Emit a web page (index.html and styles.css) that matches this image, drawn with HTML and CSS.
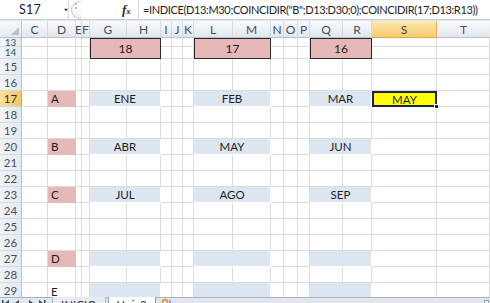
FILE: index.html
```html
<!DOCTYPE html>
<html lang="es">
<head>
<meta charset="utf-8">
<title>Hoja2</title>
<link rel="stylesheet" href="styles.css">
</head>
<body>
<div class="app">
  <div class="formula-bar">
    <div class="namebox"><span class="name">S17</span><svg class="caret" width="6" height="4" viewBox="0 0 6 4"><path d="M0 0H6L3 4Z" fill="#333"/></svg></div>
    <div class="splitter"><span class="arc"></span><span class="dots"></span></div>
    <div class="fx-wrap"><span class="fx">f<small>x</small></span></div>
    <div class="formula">=INDICE(D13:M30;COINCIDIR("B";D13:D30;0);COINCIDIR(17;D13:R13))</div>
  </div>

  <div class="sheet">
    <!-- column headers -->
    <div class="corner"><svg width="8" height="8" viewBox="0 0 8 8"><path d="M8 0V8H0Z" fill="#b7c1cc"/></svg></div>
    <div class="ch">C</div><div class="ch">D</div><div class="ch">E</div><div class="ch">F</div>
    <div class="ch">G</div><div class="ch">H</div><div class="ch">I</div><div class="ch">J</div>
    <div class="ch">K</div><div class="ch">L</div><div class="ch">M</div><div class="ch">N</div>
    <div class="ch">O</div><div class="ch">P</div><div class="ch">Q</div><div class="ch">R</div>
    <div class="ch sel">S</div><div class="ch last">T</div>

    <!-- row 13 -->
    <div class="rh short"><span>13</span></div>
    <div class="c"></div><div class="c"></div><div class="c"></div><div class="c"></div>
    <div class="c head-box">18</div>
    <div class="c"></div><div class="c"></div><div class="c"></div>
    <div class="c head-box">17</div>
    <div class="c"></div><div class="c"></div><div class="c"></div>
    <div class="c head-box">16</div>
    <div class="c"></div><div class="c"></div>

    <!-- row 14 -->
    <div class="rh short clip"><span>14</span></div>
    <div class="c"></div><div class="c"></div><div class="c"></div><div class="c"></div>
    <div class="c"></div><div class="c"></div><div class="c"></div>
    <div class="c"></div><div class="c"></div><div class="c"></div>
    <div class="c"></div><div class="c"></div>

    <!-- row 15 -->
    <div class="rh">15</div>
    <div class="c"></div><div class="c"></div><div class="c"></div><div class="c"></div><div class="c"></div><div class="c"></div>
    <div class="c"></div><div class="c"></div><div class="c"></div><div class="c"></div><div class="c"></div><div class="c"></div>
    <div class="c"></div><div class="c"></div><div class="c"></div><div class="c"></div><div class="c"></div><div class="c"></div>

    <!-- row 16 -->
    <div class="rh">16</div>
    <div class="c"></div><div class="c"></div><div class="c"></div><div class="c"></div><div class="c"></div><div class="c"></div>
    <div class="c"></div><div class="c"></div><div class="c"></div><div class="c"></div><div class="c"></div><div class="c"></div>
    <div class="c"></div><div class="c"></div><div class="c"></div><div class="c"></div><div class="c"></div><div class="c"></div>

    <!-- row 17 -->
    <div class="rh sel">17</div>
    <div class="c"></div>
    <div class="c label">A</div>
    <div class="c"></div><div class="c"></div>
    <div class="c month">ENE</div>
    <div class="c"></div><div class="c"></div><div class="c"></div>
    <div class="c month">FEB</div>
    <div class="c"></div><div class="c"></div><div class="c"></div>
    <div class="c month">MAR</div>
    <div class="c active">MAY<span class="handle"></span></div>
    <div class="c"></div>

    <!-- row 18 -->
    <div class="rh">18</div>
    <div class="c"></div><div class="c"></div><div class="c"></div><div class="c"></div><div class="c"></div><div class="c"></div>
    <div class="c"></div><div class="c"></div><div class="c"></div><div class="c"></div><div class="c"></div><div class="c"></div>
    <div class="c"></div><div class="c"></div><div class="c"></div><div class="c"></div><div class="c"></div><div class="c"></div>

    <!-- row 19 -->
    <div class="rh">19</div>
    <div class="c"></div><div class="c"></div><div class="c"></div><div class="c"></div><div class="c"></div><div class="c"></div>
    <div class="c"></div><div class="c"></div><div class="c"></div><div class="c"></div><div class="c"></div><div class="c"></div>
    <div class="c"></div><div class="c"></div><div class="c"></div><div class="c"></div><div class="c"></div><div class="c"></div>

    <!-- row 20 -->
    <div class="rh">20</div>
    <div class="c"></div>
    <div class="c label">B</div>
    <div class="c"></div><div class="c"></div>
    <div class="c month">ABR</div>
    <div class="c"></div><div class="c"></div><div class="c"></div>
    <div class="c month">MAY</div>
    <div class="c"></div><div class="c"></div><div class="c"></div>
    <div class="c month">JUN</div>
    <div class="c"></div><div class="c"></div>

    <!-- row 21 -->
    <div class="rh">21</div>
    <div class="c"></div><div class="c"></div><div class="c"></div><div class="c"></div><div class="c"></div><div class="c"></div>
    <div class="c"></div><div class="c"></div><div class="c"></div><div class="c"></div><div class="c"></div><div class="c"></div>
    <div class="c"></div><div class="c"></div><div class="c"></div><div class="c"></div><div class="c"></div><div class="c"></div>

    <!-- row 22 -->
    <div class="rh">22</div>
    <div class="c"></div><div class="c"></div><div class="c"></div><div class="c"></div><div class="c"></div><div class="c"></div>
    <div class="c"></div><div class="c"></div><div class="c"></div><div class="c"></div><div class="c"></div><div class="c"></div>
    <div class="c"></div><div class="c"></div><div class="c"></div><div class="c"></div><div class="c"></div><div class="c"></div>

    <!-- row 23 -->
    <div class="rh">23</div>
    <div class="c"></div>
    <div class="c label">C</div>
    <div class="c"></div><div class="c"></div>
    <div class="c month">JUL</div>
    <div class="c"></div><div class="c"></div><div class="c"></div>
    <div class="c month">AGO</div>
    <div class="c"></div><div class="c"></div><div class="c"></div>
    <div class="c month">SEP</div>
    <div class="c"></div><div class="c"></div>

    <!-- row 24 -->
    <div class="rh">24</div>
    <div class="c"></div><div class="c"></div><div class="c"></div><div class="c"></div><div class="c"></div><div class="c"></div>
    <div class="c"></div><div class="c"></div><div class="c"></div><div class="c"></div><div class="c"></div><div class="c"></div>
    <div class="c"></div><div class="c"></div><div class="c"></div><div class="c"></div><div class="c"></div><div class="c"></div>

    <!-- row 25 -->
    <div class="rh">25</div>
    <div class="c"></div><div class="c"></div><div class="c"></div><div class="c"></div><div class="c"></div><div class="c"></div>
    <div class="c"></div><div class="c"></div><div class="c"></div><div class="c"></div><div class="c"></div><div class="c"></div>
    <div class="c"></div><div class="c"></div><div class="c"></div><div class="c"></div><div class="c"></div><div class="c"></div>

    <!-- row 26 -->
    <div class="rh">26</div>
    <div class="c"></div><div class="c"></div><div class="c"></div><div class="c"></div><div class="c"></div><div class="c"></div>
    <div class="c"></div><div class="c"></div><div class="c"></div><div class="c"></div><div class="c"></div><div class="c"></div>
    <div class="c"></div><div class="c"></div><div class="c"></div><div class="c"></div><div class="c"></div><div class="c"></div>

    <!-- row 27 -->
    <div class="rh">27</div>
    <div class="c"></div>
    <div class="c label">D</div>
    <div class="c"></div><div class="c"></div>
    <div class="c month"></div>
    <div class="c"></div><div class="c"></div><div class="c"></div>
    <div class="c month"></div>
    <div class="c"></div><div class="c"></div><div class="c"></div>
    <div class="c month"></div>
    <div class="c"></div><div class="c"></div>

    <!-- row 28 -->
    <div class="rh">28</div>
    <div class="c"></div><div class="c"></div><div class="c"></div><div class="c"></div><div class="c"></div><div class="c"></div>
    <div class="c"></div><div class="c"></div><div class="c"></div><div class="c"></div><div class="c"></div><div class="c"></div>
    <div class="c"></div><div class="c"></div><div class="c"></div><div class="c"></div><div class="c"></div><div class="c"></div>

    <!-- row 29 -->
    <div class="rh">29</div>
    <div class="c"></div>
    <div class="c plain-label">E</div>
    <div class="c"></div><div class="c"></div>
    <div class="c month"></div>
    <div class="c"></div><div class="c"></div><div class="c"></div>
    <div class="c month"></div>
    <div class="c"></div><div class="c"></div><div class="c"></div>
    <div class="c month"></div>
    <div class="c"></div><div class="c"></div>
  </div>

  <div class="tabbar">
    <div class="nav">
      <svg width="48" height="8" viewBox="0 0 48 8">
        <rect x="2" y="1" width="1.5" height="7" fill="#33455a"/><path d="M9 1V8L4.5 4.5Z" fill="#33455a"/>
        <path d="M19 1V8L14.5 4.5Z" fill="#33455a"/>
        <path d="M29 1V8L33.5 4.5Z" fill="#33455a"/>
        <path d="M39 1V8L43.5 4.5Z" fill="#33455a"/><rect x="44" y="1" width="1.5" height="7" fill="#33455a"/>
      </svg>
    </div>
    <div class="tab">INICIO</div>
    <div class="tab current">Hoja2</div>
    <div class="tab newtab"><svg width="12" height="8" viewBox="0 0 12 8"><circle cx="5" cy="4" r="2.4" fill="none" stroke="#e19a2a" stroke-width="1.6"/><rect x="9" y="2" width="2" height="6" fill="#9aa6b3"/></svg></div>
    <div class="scroll-end"></div>
  </div>
</div>
</body>
</html>
```

FILE: styles.css
```css
* { box-sizing: border-box; }

html, body {
  margin: 0;
  padding: 0;
  width: 490px;
  height: 303px;
  overflow: hidden;
  background: #ffffff;
}

.app {
  font-family: "Lato", "Open Sans", "Liberation Sans", sans-serif;
  color: #1e1e1e;
  width: 490px;
  height: 303px;
  display: flex;
  flex-direction: column;
  background: #dfe5ec;
}

/* ---------- formula bar ---------- */
.formula-bar {
  height: 20px;
  display: flex;
  align-items: stretch;
  background: #ffffff;
  border-bottom: 1px solid #c8cfd8;
  margin-bottom: 1px;
  flex: none;
}

.namebox {
  width: 69px;
  display: flex;
  align-items: center;
  border-right: 1px solid #d6dbe1;
}

.name {
  font-size: 12.5px;
  margin-left: 19px;
  letter-spacing: 0.2px;
}

.caret {
  margin-left: 23px;
}

.splitter {
  width: 52px;
  display: flex;
  align-items: center;
  background: #ffffff;
}

.arc {
  width: 10px;
  height: 18px;
  border: 1px solid #c4cbd4;
  border-right: none;
  border-radius: 9px 0 0 9px;
  margin-left: 2px;
  background: linear-gradient(#ffffff, #eef1f5);
}

.dots {
  width: 2px;
  height: 6px;
  margin-left: -6px;
  margin-top: -8px;
  border-left: 2px dotted #b9c1cb;
}

.fx-wrap {
  width: 18px;
  display: flex;
  align-items: center;
  border-right: 1px solid #d6dbe1;
}

.fx {
  font-family: "Liberation Serif", "DejaVu Serif", serif;
  font-style: italic;
  font-weight: bold;
  font-size: 13px;
  color: #2b2b2b;
  margin-left: 1px;
}

.fx small {
  font-size: 9px;
}

.formula {
  font-size: 11px;
  letter-spacing: -0.36px;
  padding-left: 4px;
  display: flex;
  align-items: center;
  white-space: nowrap;
  overflow: hidden;
  flex: 1;
}

/* ---------- sheet grid ---------- */
.sheet {
  display: grid;
  grid-template-columns: 22px 26px 28px 6px 8px 37px 34px 11px 11px 11px 39px 38px 13px 14px 12px 33px 29px 65px 53px;
  grid-template-rows: 17px 9px 12px repeat(15, 16px);
  background: #ffffff;
  height: 276px;
  overflow: hidden;
  flex: none;
}

.corner {
  background: linear-gradient(#f7f9fb, #e4e9ef);
  border-right: 1px solid #b8c2cd;
  border-bottom: 1px solid #b8c2cd;
  display: flex;
  align-items: flex-end;
  justify-content: flex-end;
  padding: 0 2px 2px 0;
}

.ch {
  background: linear-gradient(#f8fafc, #e2e7ed);
  border-right: 1px solid #d3d9e0;
  border-bottom: 1px solid #b8c2cd;
  font-size: 12px;
  color: #44505e;
  display: flex;
  align-items: center;
  justify-content: center;
  overflow: hidden;
}

.ch.sel {
  background: linear-gradient(#fde9b1, #f6cb6c);
  border-right-color: #e0b35a;
  border-bottom-color: #d8a94b;
  color: #3d3d3d;
}

.ch.last { border-right: none; }

.rh {
  background: linear-gradient(90deg, #f2f5f8, #e4e9ef);
  border-right: 1px solid #b8c2cd;
  border-bottom: 1px solid #d3d9e0;
  font-size: 11.5px;
  color: #44505e;
  display: flex;
  align-items: center;
  justify-content: center;
  overflow: hidden;
}

.rh.short {
  font-size: 10px;
  line-height: 8px;
}

.rh.short span {
  display: block;
  height: 8px;
  overflow: hidden;
}

.rh.clip {
  align-items: flex-end;
}

.rh.clip span {
  height: 9px;
  line-height: 7px;
}

.rh.sel {
  background: linear-gradient(90deg, #fbe09a, #f4c862);
  border-right-color: #d8a94b;
  color: #333333;
}

.c {
  border-right: 1px solid #dcdcdc;
  border-bottom: 1px solid #dcdcdc;
  font-size: 11.5px;
  display: flex;
  align-items: center;
  white-space: nowrap;
}

.head-box {
  grid-column: span 2;
  grid-row: span 2;
  background: #e6b8b7;
  border: 1px solid #2a2a2a;
  justify-content: center;
  font-size: 12px;
  color: #202020;
}

.label {
  background: #e6b8b7;
  border-color: #e6b8b7;
  padding-left: 3px;
}

.plain-label {
  padding-left: 3px;
  align-items: flex-end;
}

.month {
  grid-column: span 2;
  background: #dce6f1;
  border-right-color: #ffffff;
  border-bottom-color: #ffffff;
  justify-content: center;
}

.active {
  position: relative;
  background: #ffff00;
  border: 2px solid #1d1d5c;
  justify-content: center;
}

.handle {
  position: absolute;
  right: -4px;
  bottom: -4px;
  width: 5px;
  height: 5px;
  background: #1d1d5c;
  border: 1px solid #ffffff;
}

/* ---------- tab bar ---------- */
.tabbar {
  flex: 1;
  display: flex;
  align-items: flex-start;
  background: linear-gradient(#e3e8ee, #d6dde5);
  border-top: 1px solid #a9b4c0;
  font-size: 11px;
  color: #2a3440;
  position: relative;
}

.nav {
  width: 52px;
  padding-top: 1px;
  display: flex;
}

.tab {
  height: 16px;
  padding: 1px 8px 0;
  border: 1px solid #a9b4c0;
  border-top: none;
  background: #e6ebf1;
  margin-top: -1px;
  line-height: 14px;
  letter-spacing: 0.3px;
}

.tab.current {
  background: #ffffff;
  margin-left: 2px;
  border-color: #8f9cab;
}

.tab.newtab {
  background: transparent;
  border: none;
  padding: 1px 4px 0;
  display: flex;
}

.scroll-end {
  position: absolute;
  right: 1px;
  top: 2px;
  width: 5px;
  height: 6px;
  border: 1px solid #8f9cab;
  background: #f4f6f8;
}
```
